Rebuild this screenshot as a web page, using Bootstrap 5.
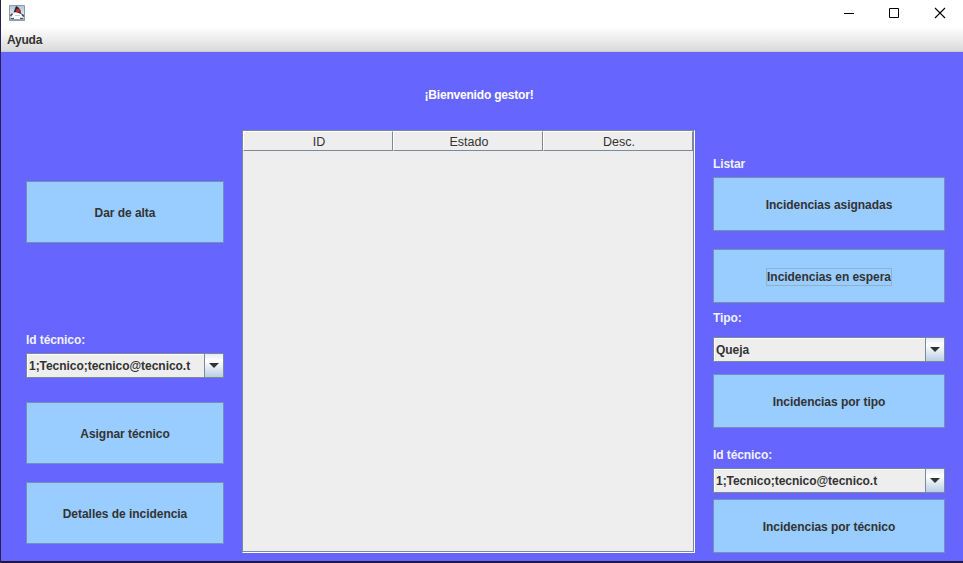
<!DOCTYPE html>
<html lang="es">
<head>
<meta charset="utf-8">
<meta name="viewport" content="width=device-width, initial-scale=1">
<title>Gestor de incidencias</title>
<link href="https://cdn.jsdelivr.net/npm/bootstrap@5.3.0/dist/css/bootstrap.min.css" rel="stylesheet">
<style>
  body { font: 700 12px/16px "Liberation Sans", Arial, sans-serif; color: #333; background: #fff; }
  .app-window { height: 563px; border-left: 1px solid #24224f; }
  .title-bar { height: 27px; padding: 5px 17px 0 8px; }
  .window-controls { gap: 33px; padding-top: 2px; }
  .menu-strip { height: 25px; padding: 5px 6px 0; background: linear-gradient(#fff, #dadada); border-bottom: 1px solid #ccc; }
  .menu-strip a { color: #333; letter-spacing: -.2px; }
  .workspace { background: #6666ff; }
  .welcome { padding: 35px 6px 27px 0; height: 78px; letter-spacing: -.2px; }
  .panels { gap: 18px; padding-left: 25px; }
  .side-left { width: 198px; }
  .side-right { width: 232px; }
  .field-label { height: 16px; color: #f2f2ff; letter-spacing: -.08px; }
  .btn.action { --bs-btn-bg: #99ccff; --bs-btn-color: #333; --bs-btn-border-color: #7290b8; --bs-btn-hover-bg: #b8dcff; --bs-btn-hover-color: #333; --bs-btn-hover-border-color: #7290b8; --bs-btn-border-radius: 0;
    font: inherit; height: 54px; padding: 2px 0 0; letter-spacing: -.04px; }
  .side-left .action { height: 62px; }
  .focus-text { outline: 1px solid #8fb0cf; line-height: 16px; }
  .combo { height: 25px; border: 1px solid #7a8a99; background: #eee; color: #333; font: inherit; letter-spacing: -.04px; }
  .combo-text { padding-left: 2px; box-shadow: inset 1px 1px #fff; }
  .combo-arrow { width: 19px; border-left: 1px solid #7a8a99; background: linear-gradient(#e4edf5, #fff 30%, #b8cfe5); }
  .list-pane { width: 453px; height: 423px; border: 1px solid #7a8a99; border-right-color: #fff; border-bottom-color: #fff; background: #eee; }
  .list-inner { border-right: 1px solid #7a8a99; border-bottom: 1px solid #7a8a99; }
  .list-head { height: 20px; font: 400 12.5px/20px "Liberation Sans", Arial, sans-serif; }
  .head-cell { border: 1px solid #fff; border-right-color: #7a8a99; border-bottom-color: #7a8a99; width: 150px; padding-left: 2px; }
  .bottom-edge { height: 2px; background: #20183c; }
  .mt-5px { margin-top: 5px; } .mt-6px { margin-top: 6px; } .mt-7px { margin-top: 7px; }
  .mt-11px { margin-top: 11px; } .mt-12px { margin-top: 12px; } .mt-18px { margin-top: 18px; }
  .mt-19px { margin-top: 19px; } .mt-24px { margin-top: 24px; } .mt-26px { margin-top: 26px; }
  .mt-51px { margin-top: 51px; } .mt-89px { margin-top: 89px; }
</style>
</head>
<body class="overflow-hidden">
<div class="app-window d-flex flex-column">
  <header class="title-bar d-flex justify-content-between align-items-start">
    <svg width="16" height="16" viewBox="0 0 16 16">
      <defs><linearGradient id="tile" x2="0" y2="1"><stop stop-color="#b4c2d2"/><stop offset=".55" stop-color="#dfe6ee"/><stop offset="1" stop-color="#8f9bab"/></linearGradient></defs>
      <path d="M.5.5h15v15H.5z" fill="url(#tile)" stroke="#8c9bad"/>
      <path d="M1 12l3-4h8l3 4-2 1-2-1v2H5v-2l-2 1z" fill="#fff"/>
      <path d="M7 1L4.500 7.500 7 7l5 2-.5-4L9 2z" fill="#29292f"/>
      <path d="M1 10l2-2 1 1-2 3zm11-2l3 2v2l-2-1zM2 13h3v1H2zm9 0h3v1h-3z" fill="#4a525d"/>
      <path d="M6 10.500h5" stroke="#c5ccd4"/>
      <circle cx="9" cy="5.800" r="2" fill="#c92f38"/>
    </svg>
    <div class="window-controls d-flex" aria-label="Ventana">
      <svg width="12" height="12"><path d="M0 6.5h10" stroke="#000"/></svg>
      <svg width="12" height="12"><path d="M.5 1.5h9v9h-9z" fill="none" stroke="#000"/></svg>
      <svg width="12" height="12"><path d="M1 1l10 10M11 1L1 11" stroke="#000" stroke-width="1.1"/></svg>
    </div>
  </header>
  <nav class="menu-strip"><a class="text-decoration-none d-block" href="#">Ayuda</a></nav>
  <main class="workspace flex-grow-1">
    <div class="welcome text-center text-white">¡Bienvenido gestor!</div>
    <div class="panels d-flex align-items-start">
      <section class="side-left d-flex flex-column">
        <button class="btn action mt-51px">Dar de alta</button>
        <div class="field-label mt-89px">Id técnico:</div>
        <button class="combo d-flex p-0 mt-5px text-start">
          <span class="combo-text flex-grow-1 h-100 d-flex align-items-center">1;Tecnico;tecnico@tecnico.t</span>
          <span class="combo-arrow h-100 d-flex align-items-center justify-content-center"><svg width="10" height="5"><path d="M0 0h10L5 5z" fill="#333"/></svg></span>
        </button>
        <button class="btn action mt-24px">Asignar técnico</button>
        <button class="btn action mt-18px">Detalles de incidencia</button>
      </section>
      <section class="list-pane">
        <div class="list-inner h-100">
          <div class="list-head d-flex text-center">
            <div class="head-cell">ID</div><div class="head-cell">Estado</div><div class="head-cell">Desc.</div>
          </div>
        </div>
      </section>
      <section class="side-right d-flex flex-column">
        <div class="field-label mt-26px">Listar</div>
        <button class="btn action mt-5px">Incidencias asignadas</button>
        <button class="btn action mt-18px"><span class="focus-text d-inline-block">Incidencias en espera</span></button>
        <div class="field-label mt-7px">Tipo:</div>
        <button class="combo d-flex p-0 mt-11px text-start">
          <span class="combo-text flex-grow-1 h-100 d-flex align-items-center">Queja</span>
          <span class="combo-arrow h-100 d-flex align-items-center justify-content-center"><svg width="10" height="5"><path d="M0 0h10L5 5z" fill="#333"/></svg></span>
        </button>
        <button class="btn action mt-12px">Incidencias por tipo</button>
        <div class="field-label mt-19px">Id técnico:</div>
        <button class="combo d-flex p-0 mt-5px text-start">
          <span class="combo-text flex-grow-1 h-100 d-flex align-items-center">1;Tecnico;tecnico@tecnico.t</span>
          <span class="combo-arrow h-100 d-flex align-items-center justify-content-center"><svg width="10" height="5"><path d="M0 0h10L5 5z" fill="#333"/></svg></span>
        </button>
        <button class="btn action mt-6px">Incidencias por técnico</button>
      </section>
    </div>
  </main>
  <div class="bottom-edge"></div>
</div>
<script src="https://cdn.jsdelivr.net/npm/bootstrap@5.3.0/dist/js/bootstrap.bundle.min.js"></script>
</body>
</html>
